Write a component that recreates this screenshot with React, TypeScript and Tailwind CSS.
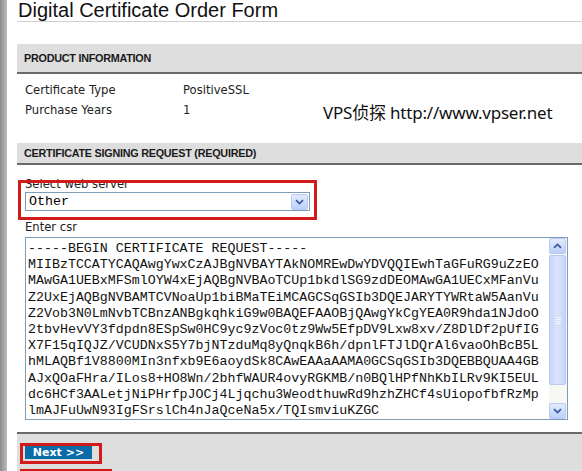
import React from "react";

const csrLines = [
  "-----BEGIN CERTIFICATE REQUEST-----",
  "MIIBzTCCATYCAQAwgYwxCzAJBgNVBAYTAkNOMREwDwYDVQQIEwhTaGFuRG9uZzEO",
  "MAwGA1UEBxMFSmlOYW4xEjAQBgNVBAoTCUp1bkdlSG9zdDEOMAwGA1UECxMFanVu",
  "Z2UxEjAQBgNVBAMTCVNoaUp1biBMaTEiMCAGCSqGSIb3DQEJARYTYWRtaW5AanVu",
  "Z2Vob3N0LmNvbTCBnzANBgkqhkiG9w0BAQEFAAOBjQAwgYkCgYEA0R9hda1NJdoO",
  "2tbvHevVY3fdpdn8ESpSw0HC9yc9zVoc0tz9Ww5EfpDV9Lxw8xv/Z8DlDf2pUfIG",
  "X7F15qIQJZ/VCUDNxS5Y7bjNTzduMq8yQnqkB6h/dpnlFTJlDQrAl6vaoOhBcB5L",
  "hMLAQBf1V8800MIn3nfxb9E6aoydSk8CAwEAAaAAMA0GCSqGSIb3DQEBBQUAA4GB",
  "AJxQOaFHra/ILos8+HO8Wn/2bhfWAUR4ovyRGKMB/n0BQlHPfNhKbILRv9KI5EUL",
  "dc6HCf3AALetjNiPHrfpJOCj4Ljqchu3WeodthuwRd9hzhZHCf4sUiopofbfRzMp",
  "lmAJFuUwN93IgFSrslCh4nJaQceNa5x/TQIsmviuKZGC",
];

const sans = "font-['Liberation_Sans',Arial,sans-serif]";
const tahoma = "font-['DejaVu_Sans',Verdana,sans-serif]";
const mono = "font-['Liberation_Mono','Courier_New',monospace]";

function SectionBar({ title, h }: { title: string; h: string }) {
  return (
    <div className={`${h} bg-[#dedede] border-b-2 border-[#6a6a6a] flex items-center pl-[7px]`}>
      <span className={`${sans} text-[10.8px] tracking-[-0.25px] font-bold text-[#1a1a1a]`}>{title}</span>
    </div>
  );
}

function Chevron({ up = false }: { up?: boolean }) {
  return (
    <svg width="9" height="6" viewBox="0 0 9 6" className={up ? "rotate-180" : ""}>
      <path d="M1 1.2 L4.5 4.6 L8 1.2" fill="none" stroke="#3d5a99" strokeWidth="1.8" />
    </svg>
  );
}

function ArrowButton({ up = false }: { up?: boolean }) {
  return (
    <div className="h-[16px] w-[17px] rounded-[2px] border border-[#b9cbf3] bg-gradient-to-b from-[#e2ebfd] to-[#bccffa] flex items-center justify-center">
      <Chevron up={up} />
    </div>
  );
}

export default function App() {
  return (
    <div className="w-[582px] h-[471px] overflow-hidden bg-white flex">
      {/* frame stripe on the left */}
      <div className="w-[7px] shrink-0 bg-gradient-to-r from-[#8a8a8a] via-[#a5a5a5] to-[#bdbdbd]" />

      <div className="ml-[10px] w-[600px] shrink-0 flex flex-col">
        <h1
          className={`${sans} text-[20px] leading-[20px] h-[22px] pl-[1px] text-[#111] border-b border-[#cfcfcf]`}
        >
          Digital Certificate Order Form
        </h1>

        <div className="mt-[22px]">
          <SectionBar title="PRODUCT INFORMATION" h="h-[30px]" />
        </div>

        <div className="relative pt-[6px] pl-[8px]">
          <div className={`${tahoma} text-[11.6px] text-[#222] leading-[20px]`}>
            <div className="flex">
              <span className="w-[158px]">Certificate Type</span>
              <span>PositiveSSL</span>
            </div>
            <div className="flex">
              <span className="w-[158px]">Purchase Years</span>
              <span>1</span>
            </div>
          </div>
          <span
            className={`absolute left-[306px] top-[27px] leading-[23px] font-['Noto_Sans','Noto_Sans_CJK_SC',sans-serif] text-[17px] text-[#111] tracking-[-0.2px]`}
          >
            VPS侦探 http://www.vpser.net
          </span>
        </div>

        <div className="mt-[23px]">
          <SectionBar title="CERTIFICATE SIGNING REQUEST (REQUIRED)" h="h-[22px]" />
        </div>

        <div className="relative mt-[14px] pl-[8px]">
          <div className={`${tahoma} text-[11.6px] leading-[11px] h-[13px] text-[#222]`}>Select web server</div>
          <div className="w-[285px] h-[19px] border border-[#7f9db9] bg-white flex items-center justify-between pl-[3px] pr-[1px]">
            <span className={`${mono} text-[13.3px] text-black`}>Other</span>
            <ArrowButton />
          </div>
          {/* red highlight frame */}
          <div className="absolute left-[1px] top-[1px] w-[299px] h-[40px] border-[3px] border-[#d11a1a]" />
        </div>

        <div className={`${tahoma} mt-[10px] pl-[8px] text-[11.6px] leading-[13px] text-[#222]`}>Enter csr</div>

        <div className="ml-[8px] mt-[3px] w-[543px] h-[183px] border border-[#7f9db9] flex">
          <div className={`${mono} flex-1 text-[13.3px] leading-[16.2px] text-[#111] pl-[2px] pt-[3px] whitespace-pre overflow-hidden`}>
            {csrLines.map((l, i) => (
              <div key={i}>{l}</div>
            ))}
          </div>
          <div className="w-[18px] bg-[#f7f7f4] flex flex-col">
            <ArrowButton up />
            <div className="flex-1 relative">
              <div className="absolute left-0 top-[1px] w-[17px] h-[130px] rounded-[2px] border border-[#b9cbf3] bg-gradient-to-r from-[#c8d6fb] via-[#d9e4fd] to-[#c4d4fa] flex items-center justify-center">
                <div className="flex flex-col gap-[1px]">
                  <div className="w-[6px] h-px bg-[#eef3fe]" />
                  <div className="w-[6px] h-px bg-[#eef3fe]" />
                  <div className="w-[6px] h-px bg-[#eef3fe]" />
                  <div className="w-[6px] h-px bg-[#eef3fe]" />
                </div>
              </div>
            </div>
            <ArrowButton />
          </div>
        </div>

        <div className="mt-[12px] flex-1 bg-[#dedede] border-t-2 border-[#6a6a6a] relative">
          <div className="relative mt-[12px] ml-[8px] w-[67px] h-[13px] bg-[#0b6aa8] flex items-center justify-center">
            <span className={`${tahoma} text-[11px] font-bold text-white leading-none`}>Next &gt;&gt;</span>
          </div>
          {/* red highlight frames */}
          <div className="absolute left-[3px] top-[9px] w-[82px] h-[21px] border-[3px] border-[#d11a1a]" />
          <div className="absolute left-[3px] top-[35px] w-[92px] h-[10px] border-t-[2px] border-[#d11a1a]" />
        </div>
      </div>
    </div>
  );
}
